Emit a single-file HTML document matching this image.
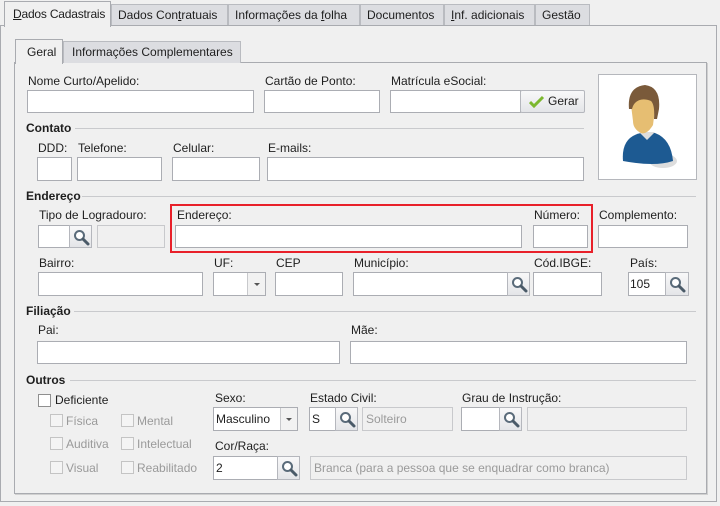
<!DOCTYPE html><html><head><meta charset="utf-8"><style>
*{box-sizing:border-box}
body{margin:0;width:720px;height:506px;background:#f0f0f0;font-family:"Liberation Sans",sans-serif;font-size:12px;color:#1e1e1e;position:relative;overflow:hidden}
div,span{position:absolute}
.l{line-height:16px;white-space:nowrap}
.h{font-weight:bold;line-height:16px}
.i{background:#fff;border:1px solid #abadb3}
.d{background:#f0f0f0;border:1px solid #c8c9cc}
.s{background:linear-gradient(#f8f8f9,#e4e5e8);border:1px solid #b5b7bd}
.s svg{position:absolute;left:3px;top:3px}
.t{background:#dcdde1;border:1px solid #b9bbc0;border-bottom:none;line-height:20px;padding-left:6px;white-space:nowrap}
.ln{height:1px;background:#c9cacd}
.cb{width:13px;height:13px;border:1px solid #8f8f8f;background:#fff}
.cbd{width:13px;height:13px;border:1px solid #c4c4c4;background:#f4f4f4}
.g{color:#9a9a9a}
</style></head><body>
<svg width="0" height="0" style="position:absolute"><defs><g id="mg"><circle cx="6.5" cy="6.5" r="4.5" fill="#fff" stroke="#5a6b7a" stroke-width="2"/><path d="M10 10l5 5" stroke="#4a5a68" stroke-width="3" stroke-linecap="round"/></g></defs></svg>
<div style="left:0;top:25px;width:717px;height:477px;border:1px solid #a9abb0;background:#f0f0f0"></div>
<div class="t" style="left:111px;top:4px;width:117px;height:21px">Dados Con<u>t</u>ratuais</div>
<div class="t" style="left:228px;top:4px;width:132px;height:21px">Informações da <u>f</u>olha</div>
<div class="t" style="left:360px;top:4px;width:84px;height:21px">Documentos</div>
<div class="t" style="left:444px;top:4px;width:91px;height:21px"><u>I</u>nf. adicionais</div>
<div class="t" style="left:535px;top:4px;width:55px;height:21px">Gestão</div>
<div style="left:4px;top:1px;width:107px;height:26px;background:#f0f0f0;border:1px solid #a9abb0;border-bottom:none;line-height:24px;padding-left:8px;white-space:nowrap;letter-spacing:-0.2px"><u>D</u>ados Cadastrais</div>
<div style="left:14px;top:62px;width:693px;height:432px;border:1px solid #a9abb0;box-shadow:1px 1px 0 #d0d0d0"></div>
<div class="t" style="left:63px;top:41px;width:178px;height:22px;padding-left:8px">Informações Complementares</div>
<div style="left:15px;top:39px;width:48px;height:25px;background:#f0f0f0;border:1px solid #a9abb0;border-bottom:none;line-height:24px;padding-left:11px">Geral</div>

<div class="l" style="left:28px;top:73px">Nome Curto/Apelido:</div><div class="i" style="left:27px;top:90px;width:227px;height:23px"></div>
<div class="l" style="left:265px;top:73px">Cartão de Ponto:</div><div class="i" style="left:264px;top:90px;width:116px;height:23px"></div>
<div class="l" style="left:391px;top:73px">Matrícula eSocial:</div><div class="i" style="left:390px;top:90px;width:131px;height:23px"></div>
<div class="s" style="left:520px;top:90px;width:65px;height:23px;border-radius:2px;line-height:21px;padding-left:27px">Gerar<svg width="16" height="14" style="left:8px;top:4px"><path d="M1 7l4 4 9-9" stroke="#7cb82f" stroke-width="3" fill="none"/></svg></div>
<div style="left:598px;top:74px;width:99px;height:106px;background:#fff;border:1px solid #b5b7bc">
<svg width="97" height="104"><ellipse cx="64" cy="86" rx="14" ry="7" fill="#bbb" opacity=".5"/><path d="M24 86 Q22 62 42 58 L56 58 Q72 64 74 86 Q56 92 24 86Z" fill="#1d5a92"/><path d="M40 57l8 8 8-8z" fill="#ddd"/><path d="M32 30 Q32 18 46 18 Q56 20 56 34 L54 50 Q48 60 42 58 Q34 54 34 46Z" fill="#e6be72"/><path d="M30 34 Q28 12 46 10 Q62 12 60 34 L58 44 L55 44 Q56 30 52 26 Q42 22 36 28 Q34 30 33 34Z" fill="#7a5a3a"/></svg></div>

<div class="h" style="left:26px;top:120px">Contato</div><div class="ln" style="left:75px;top:128px;width:509px"></div>
<div class="l" style="left:38px;top:140px">DDD:</div><div class="i" style="left:37px;top:157px;width:35px;height:24px"></div>
<div class="l" style="left:78px;top:140px">Telefone:</div><div class="i" style="left:77px;top:157px;width:85px;height:24px"></div>
<div class="l" style="left:173px;top:140px">Celular:</div><div class="i" style="left:172px;top:157px;width:88px;height:24px"></div>
<div class="l" style="left:268px;top:140px">E-mails:</div><div class="i" style="left:267px;top:157px;width:317px;height:24px"></div>

<div class="h" style="left:26px;top:188px">Endereço</div><div class="ln" style="left:82px;top:196px;width:614px"></div>
<div class="l" style="left:39px;top:207px">Tipo de Logradouro:</div><div class="i" style="left:38px;top:225px;width:32px;height:23px"></div>
<div class="s" style="left:69px;top:225px;width:23px;height:23px"><svg width="17" height="17"><use href="#mg"/></svg></div>
<div class="d" style="left:97px;top:225px;width:68px;height:23px"></div>
<div style="left:170px;top:204px;width:423px;height:49px;border:2px solid #e8202a"></div>
<div class="l" style="left:177px;top:207px">Endereço:</div><div class="i" style="left:175px;top:225px;width:347px;height:23px"></div>
<div class="l" style="left:534px;top:207px">Número:</div><div class="i" style="left:533px;top:225px;width:55px;height:23px"></div>
<div class="l" style="left:599px;top:207px">Complemento:</div><div class="i" style="left:598px;top:225px;width:90px;height:23px"></div>
<div class="l" style="left:39px;top:255px">Bairro:</div><div class="i" style="left:38px;top:272px;width:165px;height:24px"></div>
<div class="l" style="left:214px;top:255px">UF:</div><div class="i" style="left:213px;top:272px;width:53px;height:24px"></div><div style="left:247px;top:273px;width:18px;height:22px;border-left:1px solid #c8c9cc;background:#f2f2f2"><svg width="18" height="22"><path d="M6 10h6l-3 3z" fill="#555"/></svg></div>
<div class="l" style="left:276px;top:255px">CEP</div><div class="i" style="left:275px;top:272px;width:68px;height:24px"></div>
<div class="l" style="left:354px;top:255px">Município:</div><div class="i" style="left:353px;top:272px;width:155px;height:24px"></div>
<div class="s" style="left:507px;top:272px;width:23px;height:24px"><svg width="17" height="17"><use href="#mg"/></svg></div>
<div class="l" style="left:534px;top:255px">Cód.IBGE:</div><div class="i" style="left:533px;top:272px;width:69px;height:24px"></div>
<div class="l" style="left:630px;top:255px">País:</div><div class="i" style="left:628px;top:272px;width:38px;height:24px;line-height:22px;padding-left:1px">105</div>
<div class="s" style="left:665px;top:272px;width:24px;height:24px"><svg width="17" height="17"><use href="#mg"/></svg></div>

<div class="h" style="left:26px;top:303px">Filiação</div><div class="ln" style="left:74px;top:311px;width:622px"></div>
<div class="l" style="left:38px;top:322px">Pai:</div><div class="i" style="left:37px;top:341px;width:303px;height:23px"></div>
<div class="l" style="left:351px;top:322px">Mãe:</div><div class="i" style="left:350px;top:341px;width:337px;height:23px"></div>

<div class="h" style="left:26px;top:372px">Outros</div><div class="ln" style="left:70px;top:380px;width:626px"></div>
<div class="cb" style="left:38px;top:394px"></div><div class="l" style="left:55px;top:392px">Deficiente</div>
<div class="cbd" style="left:50px;top:414px"></div><div class="l g" style="left:66px;top:413px">Física</div>
<div class="cbd" style="left:121px;top:414px"></div><div class="l g" style="left:137px;top:413px">Mental</div>
<div class="cbd" style="left:50px;top:437px"></div><div class="l g" style="left:66px;top:436px">Auditiva</div>
<div class="cbd" style="left:121px;top:437px"></div><div class="l g" style="left:137px;top:436px">Intelectual</div>
<div class="cbd" style="left:50px;top:461px"></div><div class="l g" style="left:66px;top:460px">Visual</div>
<div class="cbd" style="left:121px;top:461px"></div><div class="l g" style="left:137px;top:460px">Reabilitado</div>
<div class="l" style="left:215px;top:390px">Sexo:</div><div class="i" style="left:213px;top:407px;width:85px;height:24px;line-height:22px;padding-left:2px">Masculino</div><div style="left:280px;top:408px;width:17px;height:22px;border-left:1px solid #c8c9cc;background:#f2f2f2"><svg width="17" height="22"><path d="M5 10h6l-3 3z" fill="#555"/></svg></div>
<div class="l" style="left:310px;top:390px">Estado Civil:</div><div class="i" style="left:309px;top:407px;width:27px;height:24px;line-height:22px;padding-left:2px">S</div>
<div class="s" style="left:335px;top:407px;width:23px;height:24px"><svg width="17" height="17"><use href="#mg"/></svg></div>
<div class="d g" style="left:362px;top:407px;width:91px;height:24px;line-height:22px;padding-left:3px">Solteiro</div>
<div class="l" style="left:462px;top:390px">Grau de Instrução:</div><div class="i" style="left:461px;top:407px;width:39px;height:24px"></div>
<div class="s" style="left:499px;top:407px;width:23px;height:24px"><svg width="17" height="17"><use href="#mg"/></svg></div>
<div class="d" style="left:527px;top:407px;width:160px;height:24px"></div>
<div class="l" style="left:215px;top:438px">Cor/Raça:</div><div class="i" style="left:213px;top:456px;width:65px;height:24px;line-height:22px;padding-left:2px">2</div>
<div class="s" style="left:277px;top:456px;width:23px;height:24px"><svg width="17" height="17"><use href="#mg"/></svg></div>
<div class="d g" style="left:310px;top:456px;width:377px;height:24px;line-height:22px;padding-left:3px">Branca (para a pessoa que se enquadrar como branca)</div>
</body></html>
